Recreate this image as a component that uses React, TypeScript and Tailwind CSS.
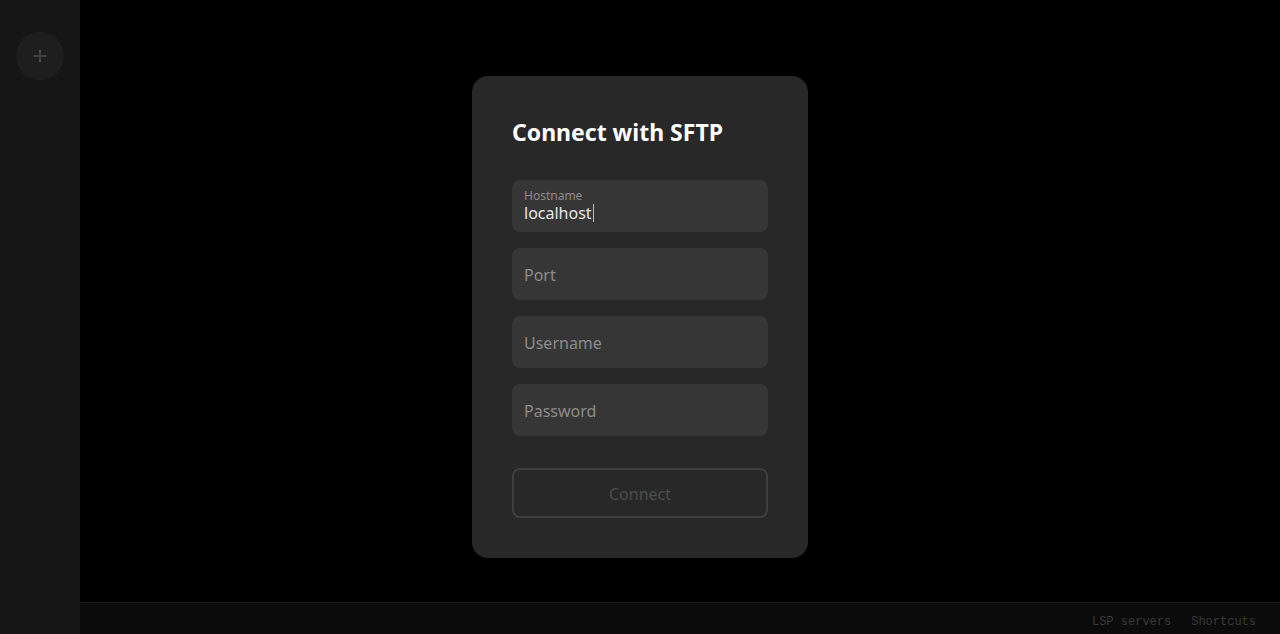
import React from "react";

const font = { fontFamily: '"Noto Sans", "Open Sans", sans-serif' };

const Field = ({ label, value }: { label: string; value?: string }) => {
  if (value !== undefined) {
    return (
      <div className="flex h-[52px] flex-col justify-center rounded-lg bg-[#363636] px-3 pb-0.5">
        <span className="text-[12px] leading-4 text-[#8c8c8c]">{label}</span>
        <span className="flex items-center text-[16px] leading-[18px] text-[#e6e6e6]">
          {value}
          <span className="ml-px inline-block h-[18px] w-px bg-[#bdbdbd]" />
        </span>
      </div>
    );
  }
  return (
    <div className="flex h-[52px] items-center rounded-lg bg-[#363636] px-3 pt-0.5 text-[16px] text-[#8c8c8c]">
      {label}
    </div>
  );
};

export default function App() {
  return (
    <div className="flex h-[634px] w-full bg-black" style={font}>
      <aside className="flex w-20 shrink-0 flex-col items-center bg-[#161616] pt-8">
        <button className="flex h-12 w-12 items-center justify-center rounded-full bg-[#1e1e1e] text-[#444444]">
          <svg width="16" height="16" viewBox="0 0 16 16" fill="none">
            <path d="M8 1.5v13M1.5 8h13" stroke="currentColor" strokeWidth="2" />
          </svg>
        </button>
      </aside>
      <main className="relative flex flex-1 items-center justify-center pr-20">
        <div className="w-[336px] rounded-2xl bg-[#282828] p-10">
          <h1 className="mb-8 text-[23px] font-bold leading-8 text-white">Connect with SFTP</h1>
          <div className="flex flex-col gap-4">
            <Field label="Hostname" value="localhost" />
            <Field label="Port" />
            <Field label="Username" />
            <Field label="Password" />
          </div>
          <button className="mt-8 flex h-[50px] w-full items-center justify-center rounded-lg border-2 border-[#3e3e3e] pt-0.5 text-[16px] text-[#4c4c4c]">
            Connect
          </button>
        </div>
        <footer
          className="absolute bottom-0 left-0 right-0 flex h-[32px] items-center justify-end gap-5 border-t border-[#1c1c1c] bg-[#0b0b0b] pr-6 pt-1.5 text-[12px] text-[#3a3a3a]"
          style={{ fontFamily: '"Liberation Mono", monospace' }}
        >
          <span>LSP servers</span>
          <span>Shortcuts</span>
        </footer>
      </main>
    </div>
  );
}
